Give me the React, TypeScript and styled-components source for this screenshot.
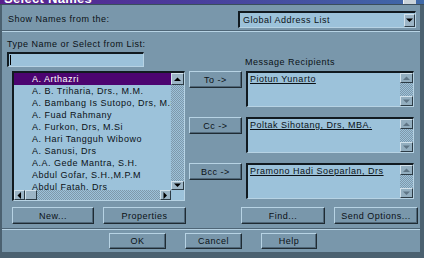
import styled, { createGlobalStyle } from "styled-components";

const FACE = "#7997ab";
const FIELD = "#9cc2da";
const LIGHT = "#b7d3e4";
const DARK = "#2c3b45";
const SHADE = "#4f6677";
const FONT = `"Liberation Sans", Arial, sans-serif`;

const GlobalStyle = createGlobalStyle`
  html, body {
    margin: 0;
    padding: 0;
    background: #4b6170;
    overflow: hidden;
  }
  body {
    font-family: ${FONT};
    font-size: 9px;
    letter-spacing: 0.5px;
    color: #0b1116;
  }
`;

const Window = styled.div`
  width: 424px;
  height: 258px;
  background: #4b6170;
  display: flex;
  flex-direction: column;
`;

const TitleBar = styled.div`
  height: 4px;
  overflow: hidden;
  display: flex;
  justify-content: space-between;
  background: linear-gradient(90deg, #5a1f8e 0%, #4a3d9c 45%, #3f6aa8 100%);
  border-bottom: 1px solid #3a4e5c;
`;

const TitleText = styled.span`
  margin: -9px 0 0 4px;
  font-size: 13px;
  font-weight: bold;
  color: #fff;
  letter-spacing: 0.3px;
`;

const TitleClose = styled.span`
  width: 12px;
  margin-right: 8px;
  background: #c9d3da;
  border-left: 1px solid #eef2f5;
`;

const Body = styled.div`
  margin: 0 4px 0 2px;
  height: 247px;
  background: ${FACE};
  display: flex;
  flex-direction: column;
`;

const TopRow = styled.div`
  display: flex;
  align-items: center;
  justify-content: space-between;
  padding: 6px 4px 0 6px;
`;

const Label = styled.span`
  line-height: 11px;
  white-space: nowrap;
`;

const Groove = styled.div<{ $top: number }>`
  margin-top: ${({ $top }) => $top}px;
  border-top: 1px solid ${SHADE};
  border-bottom: 1px solid ${LIGHT};
`;

const Sunken = styled.div`
  background: ${FIELD};
  border-top: 2px solid #111a20;
  border-left: 2px solid #111a20;
  border-right: 1px solid ${LIGHT};
  border-bottom: 1px solid ${LIGHT};
  box-sizing: border-box;
`;

const Dropdown = styled(Sunken)`
  width: 178px;
  height: 17px;
  display: flex;
  align-items: center;
  justify-content: space-between;
  padding-left: 3px;
`;

const TypeLabel = styled(Label)`
  margin: 7px 0 0 5px;
`;

const InputRow = styled.div`
  display: flex;
  align-items: flex-end;
  margin-top: 2px;
  padding-left: 5px;
`;

const NameInput = styled(Sunken)`
  width: 137px;
  height: 15px;
  display: flex;
  align-items: center;
  padding-left: 1px;
`;

const Caret = styled.span`
  width: 1px;
  height: 10px;
  background: #000;
`;

const RecipLabel = styled(Label)`
  margin: 0 0 -1px 101px;
`;

const Main = styled.div`
  display: flex;
  margin-top: 4px;
  padding-left: 10px;
`;

const ListBox = styled(Sunken)`
  width: 173px;
  height: 130px;
  display: grid;
  grid-template-columns: 1fr 13px;
  grid-template-rows: 1fr 10px;
  border-right-width: 1px;
`;

const Items = styled.div`
  overflow: hidden;
  white-space: nowrap;
`;

const Item = styled.div<{ $selected?: boolean }>`
  height: 12px;
  line-height: 12px;
  padding-left: 18px;
  background: ${({ $selected }) => ($selected ? "#4c0470" : "transparent")};
  color: ${({ $selected }) => ($selected ? "#fff" : "#0b1116")};
`;

const VScroll = styled.div`
  display: flex;
  flex-direction: column;
  justify-content: space-between;
  background: repeating-conic-gradient(${FIELD} 0 25%, #7f98aa 0 50%) 0 0 / 2px 2px;
`;

const HScroll = styled.div`
  display: flex;
  align-items: stretch;
  background: repeating-conic-gradient(${FIELD} 0 25%, #7f98aa 0 50%) 0 0 / 2px 2px;
`;

const ArrowBtn = styled.div<{ $w?: number; $h?: number; $dim?: boolean }>`
  width: ${({ $w }) => ($w ? `${$w}px` : "auto")};
  height: ${({ $h }) => ($h ? `${$h}px` : "auto")};
  box-sizing: border-box;
  background: ${({ $dim }) => ($dim ? "#93aebf" : "#9cb5c6")};
  border-top: 1px solid #d2e2ec;
  border-left: 1px solid #d2e2ec;
  border-right: 1px solid ${DARK};
  border-bottom: 1px solid ${DARK};
  display: flex;
  align-items: center;
  justify-content: center;
`;

const Thumb = styled(ArrowBtn)`
  margin-right: auto;
`;

const Corner = styled.div`
  background: ${FIELD};
`;

const RecipColumn = styled.div`
  display: flex;
  flex-direction: column;
  gap: 10px;
  margin-left: 4px;
`;

const RecipRow = styled.div`
  display: flex;
  gap: 4px;
  align-items: flex-start;
`;

const Button = styled.button<{ $w: number; $h?: number }>`
  width: ${({ $w }) => $w}px;
  height: ${({ $h }) => $h ?? 17}px;
  padding: 0;
  box-sizing: border-box;
  font-family: ${FONT};
  font-size: 9px;
  letter-spacing: 0.5px;
  color: #0b1116;
  background: ${FACE};
  border: 1px solid;
  border-color: ${LIGHT} #1f2b33 #1f2b33 ${LIGHT};
  box-shadow: inset -1px -1px 0 ${SHADE};
  white-space: nowrap;
`;

const RecipBox = styled(Sunken)`
  width: 168px;
  height: 36px;
  display: grid;
  grid-template-columns: 1fr 13px;
`;

const RecipName = styled.span`
  padding: 1px 0 0 2px;
  line-height: 11px;
  text-decoration: underline;
  white-space: nowrap;
`;

const ButtonRow = styled.div<{ $top: number; $left: number; $gap: number }>`
  display: flex;
  margin-top: ${({ $top }) => $top}px;
  padding-left: ${({ $left }) => $left}px;
  gap: ${({ $gap }) => $gap}px;
`;

const Spacer = styled.span<{ $w: number }>`
  width: ${({ $w }) => $w}px;
`;

type Dir = "up" | "down" | "left" | "right";

const Arrow = ({ dir, dim }: { dir: Dir; dim?: boolean }) => {
  const pts = {
    up: "0,4 3.5,0.5 7,4",
    down: "0,0.5 3.5,4 7,0.5",
    left: "4,0 0.5,3.5 4,7",
    right: "0.5,0 4,3.5 0.5,7",
  }[dir];
  const vertical = dir === "up" || dir === "down";
  return (
    <svg width={vertical ? 7 : 5} height={vertical ? 5 : 7} viewBox={vertical ? "0 0 7 5" : "0 0 5 7"}>
      <polygon points={pts} fill={dim ? "#5f7585" : "#000"} />
    </svg>
  );
};

const names = [
  "A. Arthazri",
  "A. B.  Triharia, Drs., M.M.",
  "A. Bambang  Is Sutopo, Drs, M.Si",
  "A. Fuad  Rahmany",
  "A. Furkon, Drs, M.Si",
  "A. Hari Tangguh Wibowo",
  "A. Sanusi, Drs",
  "A.A. Gede Mantra, S.H.",
  "Abdul  Gofar, S.H.,M.P.M",
  "Abdul  Fatah, Drs",
];

const recipients = [
  { label: "To ->", name: "Piotun Yunarto" },
  { label: "Cc ->", name: "Poltak  Sihotang, Drs, MBA." },
  { label: "Bcc ->", name: "Pramono Hadi Soeparlan, Drs" },
];

export default function App() {
  return (
    <>
      <GlobalStyle />
      <Window>
        <TitleBar>
          <TitleText>Select Names</TitleText>
          <TitleClose />
        </TitleBar>
        <Body>
          <TopRow>
            <Label>Show Names from the:</Label>
            <Dropdown>
              <Label>Global Address List</Label>
              <ArrowBtn $w={11} $h={13}>
                <Arrow dir="down" />
              </ArrowBtn>
            </Dropdown>
          </TopRow>
          <Groove $top={2} />
          <TypeLabel>Type Name or Select from List:</TypeLabel>
          <InputRow>
            <NameInput>
              <Caret />
            </NameInput>
            <RecipLabel>Message Recipients</RecipLabel>
          </InputRow>
          <Main>
            <ListBox>
              <Items>
                {names.map((n, i) => (
                  <Item key={n} $selected={i === 0}>
                    {n}
                  </Item>
                ))}
              </Items>
              <VScroll>
                <ArrowBtn $h={12}>
                  <Arrow dir="up" />
                </ArrowBtn>
                <ArrowBtn $h={9}>
                  <Arrow dir="down" />
                </ArrowBtn>
              </VScroll>
              <HScroll>
                <ArrowBtn $w={11}>
                  <Arrow dir="left" />
                </ArrowBtn>
                <Thumb $w={12} />
                <ArrowBtn $w={11}>
                  <Arrow dir="right" />
                </ArrowBtn>
              </HScroll>
              <Corner />
            </ListBox>
            <RecipColumn>
              {recipients.map((r) => (
                <RecipRow key={r.label}>
                  <Button $w={53}>{r.label}</Button>
                  <RecipBox>
                    <RecipName>{r.name}</RecipName>
                    <VScroll>
                      <ArrowBtn $h={10} $dim>
                        <Arrow dir="up" dim />
                      </ArrowBtn>
                      <ArrowBtn $h={10} $dim>
                        <Arrow dir="down" dim />
                      </ArrowBtn>
                    </VScroll>
                  </RecipBox>
                </RecipRow>
              ))}
            </RecipColumn>
          </Main>
          <ButtonRow $top={6} $left={10} $gap={9}>
            <Button $w={82}>New...</Button>
            <Button $w={83}>Properties</Button>
            <Spacer $w={37} />
            <Button $w={84}>Find...</Button>
            <Button $w={84}>Send Options...</Button>
          </ButtonRow>
          <Groove $top={4} />
          <ButtonRow $top={3} $left={107} $gap={19}>
            <Button $w={57} $h={16}>OK</Button>
            <Button $w={57} $h={16}>Cancel</Button>
            <Button $w={56} $h={16}>Help</Button>
          </ButtonRow>
        </Body>
      </Window>
    </>
  );
}
